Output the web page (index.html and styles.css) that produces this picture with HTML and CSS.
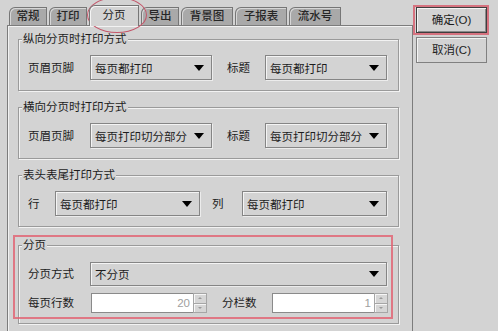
FILE: index.html
```html
<!DOCTYPE html>
<html lang="zh">
<head>
<meta charset="utf-8">
<link rel="stylesheet" href="styles.css">
</head>
<body>
<div class="window">
  <div class="tabpane">
    <div class="tabs">
      <div class="tab">常规</div>
      <div class="tab">打印</div>
      <div class="tab sel">分页</div>
      <div class="tab">导出</div>
      <div class="tab wide">背景图</div>
      <div class="tab wide">子报表</div>
      <div class="tab wide">流水号</div>
    </div>
    <div class="panel">
      <div class="group">
        <div class="gtitle">纵向分页时打印方式</div>
        <div class="row r-a">
          <span class="lbl">页眉页脚</span>
          <div class="combo"><span>每页都打印</span><i class="arrow"></i></div>
          <span class="lbl gapl">标题</span>
          <div class="combo"><span>每页都打印</span><i class="arrow"></i></div>
        </div>
      </div>
      <div class="group">
        <div class="gtitle">横向分页时打印方式</div>
        <div class="row r-a">
          <span class="lbl">页眉页脚</span>
          <div class="combo"><span>每页打印切分部分</span><i class="arrow"></i></div>
          <span class="lbl gapl">标题</span>
          <div class="combo"><span>每页打印切分部分</span><i class="arrow"></i></div>
        </div>
      </div>
      <div class="group">
        <div class="gtitle">表头表尾打印方式</div>
        <div class="row r-b">
          <span class="lbl">行</span>
          <div class="combo"><span>每页都打印</span><i class="arrow"></i></div>
          <span class="lbl gapl">列</span>
          <div class="combo"><span>每页都打印</span><i class="arrow"></i></div>
        </div>
      </div>
      <div class="group last">
        <div class="gtitle">分页</div>
        <div class="row r-c">
          <span class="lbl">分页方式</span>
          <div class="combo"><span>不分页</span><i class="arrow"></i></div>
        </div>
        <div class="row r-d">
          <span class="lbl">每页行数</span>
          <div class="spin">
            <div class="field">20</div>
            <div class="spinbtns"><div class="sb"><i class="up"></i></div><div class="sb"><i class="dn"></i></div></div>
          </div>
          <span class="lbl gapl">分栏数</span>
          <div class="spin">
            <div class="field">1</div>
            <div class="spinbtns"><div class="sb"><i class="up"></i></div><div class="sb"><i class="dn"></i></div></div>
          </div>
        </div>
      </div>
    </div>
  </div>
  <div class="side">
    <div class="btn default">确定(O)</div>
    <div class="btn">取消(C)</div>
  </div>
  <div class="mark ellipse"></div>
  <div class="mark okbox"></div>
  <div class="mark pagebox"></div>
</div>
</body>
</html>
```

FILE: styles.css
```css
* { box-sizing: border-box; }
html, body { margin: 0; padding: 0; }
body {
  background: #d3d3d3;
  font-family: "Liberation Sans", "Noto Sans CJK SC", sans-serif;
  font-size: 11.5px;
  color: #1c1c1c;
  width: 498px;
  height: 331px;
  overflow: hidden;
}
.window {
  position: relative;
  display: flex;
  height: 331px;
}
.tabpane {
  width: 406px;
  margin-left: 7px;
  display: flex;
  flex-direction: column;
}
.tabs {
  display: flex;
  align-items: flex-end;
  gap: 2px;
  height: 25px;
  padding: 5px 0 0 2px;
}
.tab {
  height: 18px;
  line-height: 16px;
  padding: 0 6.5px;
  background: #a9a9a9;
  border: 1px solid #767676;
  border-bottom: none;
  border-top-left-radius: 6px;
  box-shadow: inset 1px 1px 0 #d6d6d6;
  font-weight: 500;
  font-size: 11.5px;
  color: #262626;
  white-space: nowrap;
}
.tab.wide { padding: 0 7.75px; }
.tab.sel {
  position: relative;
  z-index: 1;
  height: 21px;
  margin-bottom: -1px;
  line-height: 19px;
  padding: 0 12.5px;
  background: #d3d3d3;
  box-shadow: inset 1px 1px 0 #f4f4f4;
  font-weight: normal;
  color: #1c1c1c;
}
.panel {
  flex: 1;
  border: 1px solid #7c7c7c;
  border-bottom: none;
  box-shadow: inset 1px 1px 0 #f2f2f2;
  padding: 13px 13px 0 10px;
  display: flex;
  flex-direction: column;
  gap: 16px;
}
.group {
  border: 1px solid #9a9a9a;
  box-shadow: 1px 1px 0 #f2f2f2, inset 1px 1px 0 #f2f2f2;
  padding: 0 10px 10px 9px;
  display: flex;
  flex-direction: column;
}
.group.last { margin-top: 2px; }
.gtitle {
  width: fit-content;
  height: 14px;
  line-height: 14px;
  margin: -8px 0 0 -6px;
  padding: 0 1px;
  background: #d3d3d3;
  white-space: nowrap;
}
.row {
  display: grid;
  align-items: center;
  margin-top: 9px;
  height: 25px;
}
.r-a { grid-template-columns: 62px 122px 53px 122px; }
.r-b { grid-template-columns: 27px 145px 42px 145px; }
.r-c { grid-template-columns: 62px 297px; margin-top: 10px; height: 24px; }
.r-d { grid-template-columns: 63px 116px 65px 116px; margin-top: 7px; height: 20px; }
.lbl { white-space: nowrap; line-height: 14px; }
.gapl { padding-left: 15px; }
.r-b .gapl { padding-left: 12px; }
.combo {
  height: 100%;
  display: flex;
  align-items: center;
  justify-content: space-between;
  border: 1px solid #858585;
  box-shadow: inset 1px 1px 0 #f4f4f4, 1px 1px 0 #ececec;
  padding: 0 7px 0 4px;
  background: #d3d3d3;
  white-space: nowrap;
}
.arrow {
  width: 0;
  height: 0;
  border-left: 5px solid transparent;
  border-right: 5px solid transparent;
  border-top: 6px solid #000;
}
.spin {
  height: 20px;
  display: flex;
}
.field {
  flex: 1;
  background: #fff;
  border: 1px solid #8a8a8a;
  border-right: none;
  text-align: right;
  color: #a0a0a0;
  line-height: 18px;
  padding-right: 3px;
}
.spinbtns {
  width: 14px;
  display: flex;
  flex-direction: column;
}
.sb {
  flex: 1;
  display: flex;
  align-items: center;
  justify-content: center;
  background: #d6d6d6;
  border: 1px solid #a6a6a6;
  box-shadow: inset 1px 1px 0 #f6f6f6;
}
.sb + .sb { border-top: none; }
.up, .dn {
  width: 0;
  height: 0;
  border-left: 2px solid transparent;
  border-right: 2px solid transparent;
}
.up { border-bottom: 2px solid #9a9a9a; }
.dn { border-top: 2px solid #9a9a9a; }
.side {
  padding: 7px 0 0 3px;
  display: flex;
  flex-direction: column;
  gap: 4px;
}
.btn {
  width: 71px;
  height: 26px;
  line-height: 24px;
  text-align: center;
  border: 1px solid #808080;
  box-shadow: inset 1px 1px 0 #f4f4f4;
  background: #d3d3d3;
  white-space: nowrap;
}
.btn.default {
  border-color: #3e3e3e;
  box-shadow: inset 1px 1px 0 #f4f4f4, inset -1px -1px 0 #8a8a8a;
}
.mark {
  position: absolute;
  pointer-events: none;
}
.ellipse {
  left: 87px;
  top: -3px;
  width: 60px;
  height: 36px;
  border: 1px solid #c4566a;
  border-radius: 50%;
}
.okbox {
  left: 413px;
  top: 5px;
  width: 76px;
  height: 30px;
  border: 2px solid rgba(214, 96, 112, 0.85);
}
.pagebox {
  left: 13px;
  top: 235px;
  width: 380px;
  height: 84px;
  border: 2px solid rgba(226, 96, 112, 0.8);
}
```
